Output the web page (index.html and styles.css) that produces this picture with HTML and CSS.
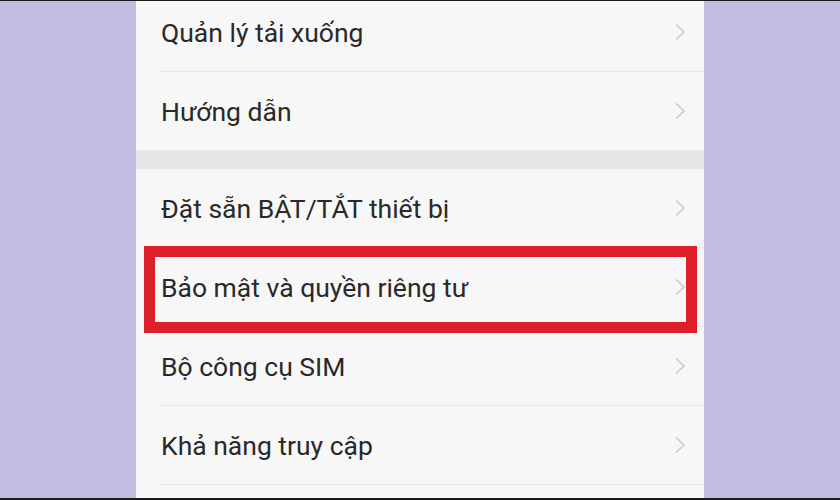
FILE: index.html
```html
<!DOCTYPE html>
<html lang="vi">
<head>
    <meta charset="UTF-8">
    <meta name="viewport" content="width=device-width, initial-scale=1.0">
    <title>Cài đặt</title>
    <link rel="stylesheet" href="styles.css">
</head>
<body>
    <div class="frame">
        <div class="screen">
            <div class="group">
                <div class="row">
                    <span class="label">Quản lý tải xuống</span>
                    <svg class="chevron" viewBox="0 0 12 18"><path d="M2 1.5 L10 9 L2 16.5"/></svg>
                </div>
                <div class="row">
                    <span class="label">Hướng dẫn</span>
                    <svg class="chevron" viewBox="0 0 12 18"><path d="M2 1.5 L10 9 L2 16.5"/></svg>
                </div>
            </div>

            <div class="spacer"></div>

            <div class="group">
                <div class="row">
                    <span class="label">Đặt sẵn BẬT/TẮT thiết bị</span>
                    <svg class="chevron" viewBox="0 0 12 18"><path d="M2 1.5 L10 9 L2 16.5"/></svg>
                </div>
                <div class="row">
                    <span class="label">Bảo mật và quyền riêng tư</span>
                    <svg class="chevron" viewBox="0 0 12 18"><path d="M2 1.5 L10 9 L2 16.5"/></svg>
                    <div class="mark"></div>
                </div>
                <div class="row">
                    <span class="label">Bộ công cụ SIM</span>
                    <svg class="chevron" viewBox="0 0 12 18"><path d="M2 1.5 L10 9 L2 16.5"/></svg>
                </div>
                <div class="row">
                    <span class="label">Khả năng truy cập</span>
                    <svg class="chevron" viewBox="0 0 12 18"><path d="M2 1.5 L10 9 L2 16.5"/></svg>
                </div>
                <div class="row"></div>
            </div>
        </div>
    </div>
</body>
</html>
```

FILE: styles.css
```css
body {
    margin: 0;
    font-family: Roboto, "Noto Sans", sans-serif;
}

.frame {
    height: 497px;
    border-top: 1px solid #1a1a1a;
    border-bottom: 2px solid #1a1a1a;
    background-color: #c3bce2;
    display: flex;
    justify-content: center;
    overflow: hidden;
}

.screen {
    width: 568px;
    margin-top: -8px;
    background-color: #f7f7f7;
}

.spacer {
    height: 19px;
    background-color: #e7e7e7;
}

.row {
    position: relative;
    height: 78px;
    margin-left: 24px;
    padding-right: 18px;
    display: flex;
    align-items: center;
    justify-content: space-between;
    border-bottom: 1px solid #e6e6e6;
}

.group .row:last-child {
    border-bottom: none;
}

.label {
    font-size: 26.5px;
    color: #292929;
    padding-left: 1px;
}

.chevron {
    width: 12px;
    height: 18px;
    fill: none;
    stroke: #c9c9c9;
    stroke-width: 1.6;
}

/* red annotation box */
.mark {
    position: absolute;
    top: -2px;
    left: -16px;
    right: 7px;
    height: 65px;
    border: 11px solid #dd1f2b;
    pointer-events: none;
}
```
